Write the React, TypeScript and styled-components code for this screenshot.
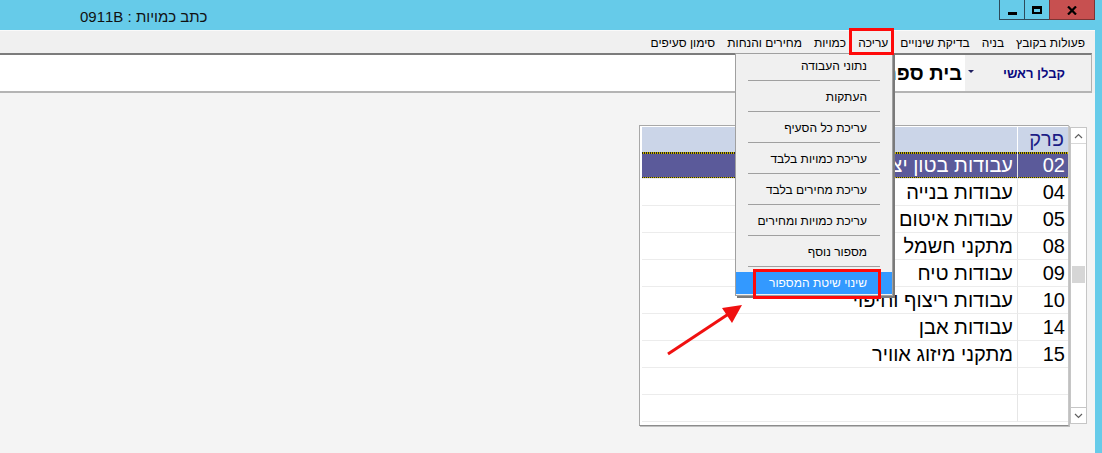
import React from "react";
import styled, { createGlobalStyle } from "styled-components";

const GlobalStyle = createGlobalStyle`
  html, body {
    margin: 0;
    padding: 0;
    overflow: hidden;
    background: #f0f0f0;
  }
  * {
    box-sizing: border-box;
  }
`;

const menuItems = ["פעולות בקובץ", "בניה", "בדיקת שינויים", "עריכה", "כמויות", "מחירים והנחות", "סימון סעיפים"];

const editItems = [
  "נתוני העבודה",
  "העתקות",
  "עריכת כל הסעיף",
  "עריכת כמויות בלבד",
  "עריכת מחירים בלבד",
  "עריכת כמויות ומחירים",
  "מספור נוסף",
  "שינוי שיטת המספור",
];

const chapters = [
  { num: "02", name: "עבודות בטון יצוק באתר", selected: true },
  { num: "04", name: "עבודות בנייה" },
  { num: "05", name: "עבודות איטום" },
  { num: "08", name: "מתקני חשמל" },
  { num: "09", name: "עבודות טיח" },
  { num: "10", name: "עבודות ריצוף וחיפוי" },
  { num: "14", name: "עבודות אבן" },
  { num: "15", name: "מתקני מיזוג אוויר" },
  { num: "", name: "" },
  { num: "", name: "" },
];

export default function App() {
  return (
    <>
      <GlobalStyle />
      <Window>
        <TitleBar>
          <Title>כתב כמויות : 0911B</Title>
          <WinButtons>
            <WinButton $w={26}>
              <MinGlyph />
            </WinButton>
            <WinButton $w={26}>
              <MaxGlyph />
            </WinButton>
            <WinButton $w={46} $close>
              <svg width="10" height="9" viewBox="0 0 10 9">
                <path d="M1 0.5 L9 8.5 M9 0.5 L1 8.5" stroke="#000" strokeWidth="2.2" />
              </svg>
            </WinButton>
          </WinButtons>
        </TitleBar>

        <Client>
          <MenuBar>
            {menuItems.map((m) => (
              <MenuItem key={m}>{m}</MenuItem>
            ))}
          </MenuBar>

          <Toolbar>
            <LabelPanel>
              <Label>קבלן ראשי</Label>
              <DropArrow />
            </LabelPanel>
            <Field>בית ספר</Field>
          </Toolbar>

          <Content>
            <Grid>
              <HeaderRow>
                <HeadCell $num>פרק</HeadCell>
                <HeadCell />
              </HeaderRow>
              {chapters.map((c, i) => (
                <Row key={i} $selected={c.selected}>
                  <Cell $num>{c.num}</Cell>
                  <Cell>{c.name}</Cell>
                </Row>
              ))}
            </Grid>
            <ScrollBar>
              <ScrollButton>
                <svg width="9" height="6" viewBox="0 0 9 6">
                  <path d="M1 5 L4.5 1.5 L8 5" fill="none" stroke="#606060" strokeWidth="1.2" />
                </svg>
              </ScrollButton>
              <Track>
                <Thumb />
              </Track>
              <ScrollButton>
                <svg width="9" height="6" viewBox="0 0 9 6">
                  <path d="M1 1 L4.5 4.5 L8 1" fill="none" stroke="#606060" strokeWidth="1.2" />
                </svg>
              </ScrollButton>
            </ScrollBar>
          </Content>
        </Client>

        <DropMenu>
          {editItems.map((item, i) => (
            <React.Fragment key={item}>
              <DropItem $active={i === editItems.length - 1}>{item}</DropItem>
              {i < editItems.length - 1 && <Separator />}
            </React.Fragment>
          ))}
        </DropMenu>

        <Highlight style={{ left: 849, top: 28, width: 45, height: 27 }} />
        <Highlight style={{ left: 753, top: 269, width: 128, height: 30 }} />
        <Arrow width="90" height="60" viewBox="0 0 90 60">
          <line x1="8" y1="57" x2="70" y2="16" stroke="#f01010" strokeWidth="3" />
          <polygon points="82,8 62,11 72,26" fill="#f01010" />
        </Arrow>
      </Window>
    </>
  );
}

const Window = styled.div`
  position: relative;
  width: 1102px;
  height: 453px;
  background: #66cbe9;
  padding-right: 7px;
  display: flex;
  flex-direction: column;
  font-family: "Liberation Sans", "DejaVu Sans", sans-serif;
`;

const TitleBar = styled.div`
  height: 30px;
  display: flex;
  align-items: flex-start;
`;

const Title = styled.div`
  direction: rtl;
  margin: 8px 0 0 80px;
  font-size: 15px;
  color: #111;
`;

const WinButtons = styled.div`
  margin-left: auto;
  display: flex;
`;

const WinButton = styled.div<{ $w: number; $close?: boolean }>`
  width: ${(p) => p.$w}px;
  height: 20px;
  border: 1px solid ${(p) => (p.$close ? "#7a3434" : "#2d4a5a")};
  border-top: none;
  margin-left: -1px;
  background: ${(p) => (p.$close ? "#c75050" : "transparent")};
  display: flex;
  align-items: center;
  justify-content: center;
  padding-top: 1px;
`;

const MinGlyph = styled.div`
  width: 9px;
  height: 3px;
  background: #000;
  margin-top: 6px;
`;

const MaxGlyph = styled.div`
  width: 10px;
  height: 8px;
  border: 2px solid #000;
  border-top-width: 3px;
`;

const Client = styled.div`
  flex: 1;
  background: #f0f0f0;
  display: flex;
  flex-direction: column;
`;

const MenuBar = styled.div`
  height: 23px;
  display: flex;
  direction: rtl;
  align-items: center;
  padding: 1px 4px 0 0;
  border-top: 1px solid #fafafa;
  font-size: 12px;
  color: #000;
`;

const MenuItem = styled.div`
  padding: 0 6px;
  white-space: nowrap;
`;

const Toolbar = styled.div`
  height: 40px;
  display: flex;
  direction: rtl;
  margin-right: 3px;
  border-top: 2px solid #7c7c7c;
  border-bottom: 2px solid #b4b4b4;
  border-right: 1px solid #b0b0b0;
`;

const LabelPanel = styled.div`
  width: 126px;
  display: flex;
  align-items: center;
  justify-content: space-between;
  padding: 0 26px 0 3px;
`;

const Label = styled.div`
  font-size: 13px;
  font-weight: bold;
  color: #0a0a80;
`;

const DropArrow = styled.div`
  width: 0;
  height: 0;
  border-left: 3px solid transparent;
  border-right: 3px solid transparent;
  border-top: 3px solid #202060;
  margin-top: -4px;
`;

const Field = styled.div`
  flex: 1;
  background: #fff;
  display: flex;
  align-items: center;
  padding-right: 3px;
  font-size: 20px;
  font-weight: bold;
  color: #000;
`;

const Content = styled.div`
  flex: 1;
  background: #f4f4f4;
  display: flex;
  justify-content: flex-end;
  align-items: flex-start;
  gap: 1px;
  padding: 32px 8px 0 0;
`;

const Grid = styled.div`
  width: 430px;
  height: 301px;
  background: #fff;
  border: 1px solid #a8a8a8;
  border-right-color: #c8c8c8;
  border-bottom-color: #8c8c8c;
  box-shadow: 1px 1px 0 #c0c0c0;
  padding: 1px 0 0 2px;
  direction: rtl;
`;

const HeaderRow = styled.div`
  display: grid;
  grid-template-columns: 51px 1fr;
  height: 25px;
  background: #cbd5e8;
`;

const HeadCell = styled.div<{ $num?: boolean }>`
  font-size: 20px;
  color: #1c1c86;
  padding-right: 4px;
  line-height: 25px;
  border-left: ${(p) => (p.$num ? "1px solid #ffffff" : "none")};
`;

const dotted = `repeating-linear-gradient(90deg, #222 0 1px, #c9b400 1px 2px)`;

const Row = styled.div<{ $selected?: boolean }>`
  display: grid;
  grid-template-columns: 51px 1fr;
  height: 27px;
  color: ${(p) => (p.$selected ? "#fff" : "#000")};
  background: ${(p) =>
    p.$selected
      ? `${dotted} top / 100% 2px no-repeat, ${dotted} bottom / 100% 2px no-repeat, #5b5a9a`
      : "#fff"};
`;

const Cell = styled.div<{ $num?: boolean }>`
  font-size: 20px;
  line-height: 26px;
  padding-right: ${(p) => (p.$num ? "3px" : "4px")};
  border-left: ${(p) => (p.$num ? "1px solid #e6e6e6" : "none")};
  border-bottom: 1px solid #ececec;
  white-space: nowrap;
  overflow: hidden;
`;

const ScrollBar = styled.div`
  width: 17px;
  height: 297px;
  margin-top: 2px;
  border: 1px solid #c6c6c6;
  background: #fff;
  display: flex;
  flex-direction: column;
`;

const ScrollButton = styled.div`
  height: 16px;
  display: flex;
  align-items: center;
  justify-content: center;
  border-bottom: 1px solid #d8d8d8;
  &:last-child {
    border-bottom: none;
    border-top: 1px solid #c6c6c6;
  }
`;

const Track = styled.div`
  flex: 1;
  padding-top: 122px;
`;

const Thumb = styled.div`
  height: 17px;
  background: #d6d6d6;
  margin: 0 1px;
`;

const DropMenu = styled.div`
  position: absolute;
  left: 735px;
  top: 53px;
  width: 158px;
  background: #f0f0f0;
  border: 1px solid #a0a0a0;
  box-shadow: 2px 2px 0 #7a7a7a;
  padding: 1px 0 1px 0;
  direction: rtl;
  font-size: 12px;
  display: flex;
  flex-direction: column;
`;

const DropItem = styled.div<{ $active?: boolean }>`
  height: 22px;
  line-height: 22px;
  padding-right: 25px;
  color: ${(p) => (p.$active ? "#fff" : "#000")};
  background: ${(p) => (p.$active ? "#3399ff" : "transparent")};
`;

const Separator = styled.div`
  height: 1px;
  background: #a0a0a0;
  margin: 3px 12px 5px 12px;
`;

const Highlight = styled.div`
  position: absolute;
  border: 3px solid #ff0a0a;
`;

const Arrow = styled.svg`
  position: absolute;
  left: 660px;
  top: 297px;
`;
